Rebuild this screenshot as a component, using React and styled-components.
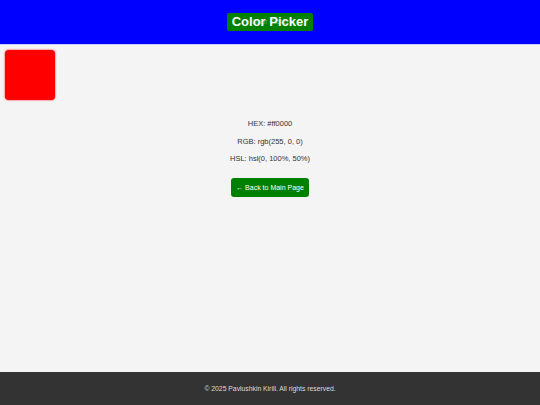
import styled, { createGlobalStyle } from 'styled-components';

const GlobalStyle = createGlobalStyle`
  html, body {
    margin: 0;
    padding: 0;
    height: 100%;
    background: #f4f4f4;
    font-family: "Liberation Sans", Arial, sans-serif;
  }
  #root {
    height: 100%;
  }
`;

const Page = styled.div`
  height: 100vh;
  display: flex;
  flex-direction: column;
`;

const Header = styled.header`
  height: 45px;
  background: #0000ff;
  display: flex;
  justify-content: center;
  align-items: center;
  border-bottom: 1px solid #ccccff;
  box-sizing: border-box;
`;

const Title = styled.h1`
  position: relative;
  margin: 0;
  background: #008000;
  color: #ffffff;
  font-size: 13px;
  font-weight: bold;
  line-height: 18px;
  padding: 0 5px;
  border-radius: 2px;
`;

const Ghost = styled.span`
  position: absolute;
  left: 0;
  right: 0;
  top: 0;
  text-align: center;
  font-size: 7px;
  font-weight: normal;
  color: rgba(200, 230, 200, 0.45);
  line-height: 18px;
`;

const Main = styled.main`
  flex: 1;
  padding: 5px 5px;
  display: flex;
  flex-direction: column;
`;

const Swatch = styled.div`
  width: 50px;
  height: 50px;
  border-radius: 4px;
  background: ${(p) => p.color};
  box-shadow: 0 0 2px ${(p) => p.color};
`;

const Info = styled.div`
  margin-top: 15px;
  display: flex;
  flex-direction: column;
  align-items: center;
  color: #333333;
  font-size: 7.5px;
`;

const Line = styled.p`
  margin: 4px 0;
  line-height: 9.5px;
`;

const BackButton = styled.button`
  margin-top: 10px;
  background: #008000;
  color: #ffffff;
  border: none;
  border-radius: 3px;
  font-family: inherit;
  font-size: 7px;
  height: 19px;
  padding: 0 5px;
  cursor: pointer;
`;

const Footer = styled.footer`
  height: 33px;
  background: #333333;
  color: #dddddd;
  font-size: 6.8px;
  display: flex;
  justify-content: center;
  align-items: center;
`;

const App = () => {
  const color = '#ff0000';
  return (
    <>
      <GlobalStyle />
      <Page>
        <Header>
          <Title>
            Color Picker
            <Ghost>Color Picker</Ghost>
          </Title>
        </Header>
        <Main>
          <Swatch color={color} />
          <Info>
            <Line>HEX: #ff0000</Line>
            <Line>RGB: rgb(255, 0, 0)</Line>
            <Line>HSL: hsl(0, 100%, 50%)</Line>
            <BackButton>← Back to Main Page</BackButton>
          </Info>
        </Main>
        <Footer>© 2025 Pavlushkin Kirill. All rights reserved.</Footer>
      </Page>
    </>
  );
};

export default App;
